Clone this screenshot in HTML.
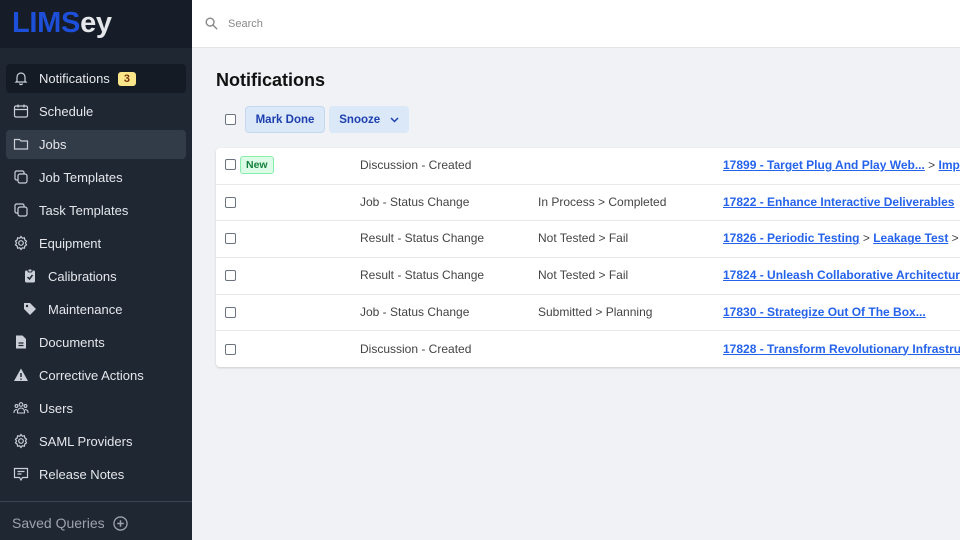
<!DOCTYPE html>
<html><head><style>
*{box-sizing:border-box;margin:0;padding:0}
body{width:960px;height:540px;overflow:hidden;font-family:"Liberation Sans",sans-serif;background:#f1f2f5;position:relative}
.sb{position:absolute;left:0;top:0;width:192px;height:540px;background:#1f2733}
.logo{height:48px;background:#161d28;padding:7px 0 0 12px;font-size:29px;font-weight:bold;letter-spacing:-0.3px}
.logo .a{color:#1d4fd8}.logo .b{color:#e5e7eb}
.it{position:absolute;left:6px;width:180px;height:29px;border-radius:4px;color:#e5e7eb;font-size:13px;display:flex;align-items:center;padding-left:33px}
.it svg{position:absolute;left:7px;top:6px}
.badge{background:#fde68a;color:#78350f;font-size:11px;font-weight:bold;border-radius:3px;padding:1px 6px;margin-left:8px}
.top{position:absolute;left:192px;top:0;right:0;height:48px;background:#fff;border-bottom:1px solid #e2e4e8}
.h1{position:absolute;left:216px;top:70px;font-size:18px;font-weight:bold;color:#111}
.cb{position:absolute;width:11px;height:11px;border:1.3px solid #6b7280;border-radius:2px;background:#fff}
.btn{position:absolute;top:106px;height:27px;background:#dbe8f8;border:1px solid #c6d8f0;border-radius:4px;color:#1e40af;font-size:11.5px;font-weight:bold;display:flex;align-items:center;justify-content:center}
.card{position:absolute;left:216px;top:148px;width:760px;height:219px;background:#fff;border-radius:4px;box-shadow:0 1px 2px rgba(0,0,0,.15)}
.row{position:absolute;left:0;right:0;height:36.7px;border-bottom:1px solid #e7e8eb;font-size:12px;color:#444}
.row span{position:absolute;top:10px;white-space:nowrap}
.lk{color:#2563eb;font-weight:bold;text-decoration:underline}
.new{position:absolute;left:24px;top:8px;background:#dcfce7;border:1px solid #86efac;color:#15803d;font-size:10.5px;font-weight:bold;border-radius:3px;padding:2px 5px}
</style></head><body>
<div class="sb">
<div class="logo"><span class="a">LIMS</span><span class="b">ey</span></div>
<div class="it" style="top:64px;background:#141b25">Notifications<span class="badge">3</span><svg width="16" height="16" viewBox="0 0 16 16" fill="none" stroke="#cbd0d8" stroke-width="1.2"><path d="M4 11V7a4 4 0 018 0v4l1 1H3zM6.5 13.5a1.6 1.6 0 003 0"/></svg></div>
<div class="it" style="top:97px">Schedule<svg width="16" height="16" viewBox="0 0 16 16" fill="none" stroke="#cbd0d8" stroke-width="1.2"><rect x="1.5" y="3" width="13" height="11" rx="1.5"/><path d="M1.5 6.5h13M5 1.5v3M11 1.5v3"/></svg></div>
<div class="it" style="top:130px;background:#323b48">Jobs<svg width="16" height="16" viewBox="0 0 16 16" fill="none" stroke="#cbd0d8" stroke-width="1.2"><path d="M1.5 3.5h5l1.5 1.5h6.5v8h-13z"/></svg></div>
<div class="it" style="top:163px">Job Templates<svg width="16" height="16" viewBox="0 0 16 16" fill="none" stroke="#cbd0d8" stroke-width="1.2"><rect x="5" y="5" width="9" height="9" rx="2"/><path d="M11 5V3.5A1.5 1.5 0 009.5 2h-6A1.5 1.5 0 002 3.5v6A1.5 1.5 0 003.5 11H5"/></svg></div>
<div class="it" style="top:196px">Task Templates<svg width="16" height="16" viewBox="0 0 16 16" fill="none" stroke="#cbd0d8" stroke-width="1.2"><rect x="5" y="5" width="9" height="9" rx="2"/><path d="M11 5V3.5A1.5 1.5 0 009.5 2h-6A1.5 1.5 0 002 3.5v6A1.5 1.5 0 003.5 11H5"/></svg></div>
<div class="it" style="top:229px">Equipment<svg width="16" height="16" viewBox="0 0 16 16" fill="none" stroke="#cbd0d8" stroke-width="1.2"><circle cx="8" cy="8" r="2.3"/><path d="M8 1.5l1.3 1.7 2.1-.4.4 2.1 1.7 1.3-1 1.8 1 1.8-1.7 1.3-.4 2.1-2.1-.4L8 14.5l-1.3-1.7-2.1.4-.4-2.1-1.7-1.3 1-1.8-1-1.8 1.7-1.3.4-2.1 2.1.4z"/></svg></div>
<div class="it" style="top:262px;padding-left:42px">Calibrations<svg style="left:16px" width="16" height="16" viewBox="0 0 16 16"><rect x="3" y="2.5" width="10" height="12" rx="1.5" fill="#cbd0d8"/><rect x="6" y="1" width="4" height="3" rx="1" fill="#cbd0d8" stroke="#1f2733"/><path d="M5.5 9l2 2 3-4" stroke="#1f2733" stroke-width="1.5" fill="none"/></svg></div>
<div class="it" style="top:295px;padding-left:42px">Maintenance<svg style="left:16px" width="16" height="16" viewBox="0 0 16 16"><path d="M2 2h6l6 6-6 6-6-6z" fill="#cbd0d8"/><circle cx="5" cy="5" r="1.2" fill="#1f2733"/></svg></div>
<div class="it" style="top:328px">Documents<svg width="16" height="16" viewBox="0 0 16 16"><path d="M3 1.5h6.5L13 5v9.5H3z" fill="#cbd0d8"/><path d="M5.5 9h5M5.5 11.5h5" stroke="#1f2733" stroke-width="1.3"/></svg></div>
<div class="it" style="top:361px">Corrective Actions<svg width="16" height="16" viewBox="0 0 16 16"><path d="M8 1.5l7 12.5H1z" fill="#cbd0d8"/><path d="M8 6v4M8 11.5v1.2" stroke="#1f2733" stroke-width="1.5"/></svg></div>
<div class="it" style="top:394px">Users<svg width="16" height="16" viewBox="0 0 16 16" fill="none" stroke="#cbd0d8" stroke-width="1.1"><circle cx="8" cy="4.5" r="1.8"/><circle cx="3.5" cy="6" r="1.4"/><circle cx="12.5" cy="6" r="1.4"/><path d="M4.5 13v-1.5a3.5 3.5 0 017 0V13zM1 13v-1a2.5 2.5 0 013-2.3M15 13v-1a2.5 2.5 0 00-3-2.3"/></svg></div>
<div class="it" style="top:427px">SAML Providers<svg width="16" height="16" viewBox="0 0 16 16" fill="none" stroke="#cbd0d8" stroke-width="1.2"><circle cx="8" cy="8" r="2.3"/><path d="M8 1.5l1.3 1.7 2.1-.4.4 2.1 1.7 1.3-1 1.8 1 1.8-1.7 1.3-.4 2.1-2.1-.4L8 14.5l-1.3-1.7-2.1.4-.4-2.1-1.7-1.3 1-1.8-1-1.8 1.7-1.3.4-2.1 2.1.4z"/></svg></div>
<div class="it" style="top:460px">Release Notes<svg width="16" height="16" viewBox="0 0 16 16" fill="none" stroke="#cbd0d8" stroke-width="1.2"><path d="M1.5 2.5h13v9h-5L8 14l-1.5-2.5h-5z"/><path d="M4.5 5.5h7M4.5 8h4"/></svg></div>
<div style="position:absolute;left:0;right:0;top:501px;border-top:1px solid #3a4350"></div>
<div style="position:absolute;left:12px;top:515px;color:#9ca3af;font-size:14px">Saved Queries</div>
<svg style="position:absolute;left:113px;top:516px" width="15" height="15" viewBox="0 0 16 16"><circle cx="8" cy="8" r="7" fill="none" stroke="#9ca3af" stroke-width="1.4"/><path d="M8 4.5v7M4.5 8h7" stroke="#9ca3af" stroke-width="1.6"/></svg>
</div>
<div class="top"><svg style="position:absolute;left:13px;top:17px" width="13" height="13" viewBox="0 0 14 14" fill="none" stroke="#888" stroke-width="1.5"><circle cx="5.5" cy="5.5" r="4.2"/><path d="M8.7 8.7L13 13"/></svg><span style="position:absolute;left:36px;top:18px;font-size:11px;color:#888">Search</span></div>
<div class="h1">Notifications</div>
<div class="cb" style="left:225px;top:114px"></div>
<div class="btn" style="left:245px;width:80px">Mark Done</div>
<div class="btn" style="left:329px;width:80px;border-color:#dbe8f8">Snooze&nbsp;&nbsp;&nbsp;<svg width="9" height="6" viewBox="0 0 9 6"><path d="M1 1l3.5 3.5L8 1" stroke="#1e40af" stroke-width="1.5" fill="none"/></svg></div>
<div class="card">
<div class="row" style="top:0"><div class="cb" style="left:9px;top:11px"></div><div class="new">New</div><span style="left:144px">Discussion - Created</span><span style="left:507px"><span class="lk" style="position:static">17899 - Target Plug And Play Web...</span> &gt; <span class="lk" style="position:static">Imp</span></span></div>
<div class="row" style="top:36.7px"><div class="cb" style="left:9px;top:12px"></div><span style="left:144px">Job - Status Change</span><span style="left:322px">In Process &gt; Completed</span><span class="lk" style="left:507px">17822 - Enhance Interactive Deliverables</span></div>
<div class="row" style="top:73.4px"><div class="cb" style="left:9px;top:12px"></div><span style="left:144px">Result - Status Change</span><span style="left:322px">Not Tested &gt; Fail</span><span style="left:507px"><span class="lk" style="position:static">17826 - Periodic Testing</span> &gt; <span class="lk" style="position:static">Leakage Test</span> &gt;</span></div>
<div class="row" style="top:110.1px"><div class="cb" style="left:9px;top:12px"></div><span style="left:144px">Result - Status Change</span><span style="left:322px">Not Tested &gt; Fail</span><span class="lk" style="left:507px">17824 - Unleash Collaborative Architectur</span></div>
<div class="row" style="top:146.8px"><div class="cb" style="left:9px;top:12px"></div><span style="left:144px">Job - Status Change</span><span style="left:322px">Submitted &gt; Planning</span><span class="lk" style="left:507px">17830 - Strategize Out Of The Box...</span></div>
<div class="row" style="top:183.5px;border:none"><div class="cb" style="left:9px;top:12px"></div><span style="left:144px">Discussion - Created</span><span class="lk" style="left:507px">17828 - Transform Revolutionary Infrastru</span></div>
</div>
</body></html>
